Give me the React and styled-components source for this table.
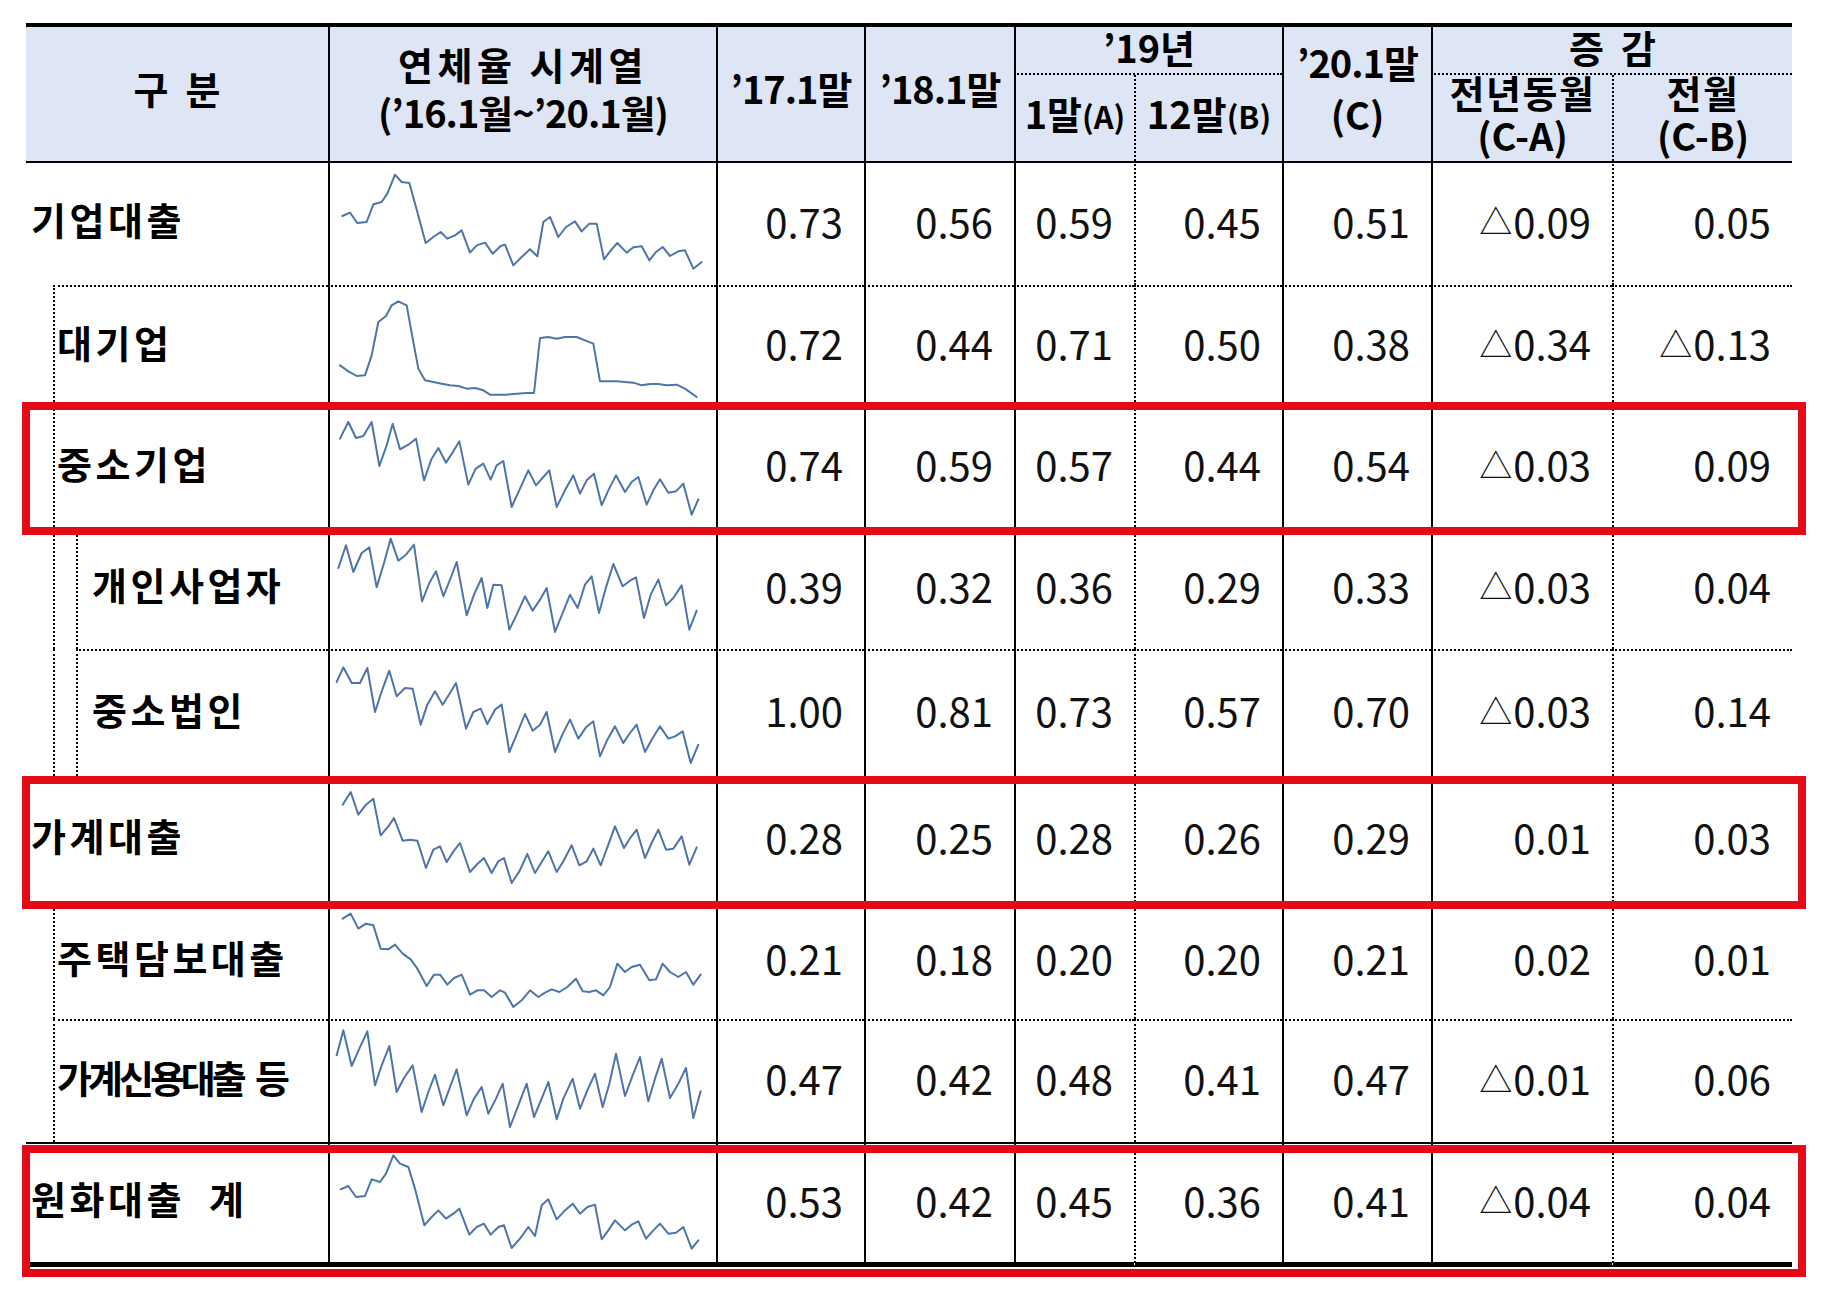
import React from 'react';
import styled, { createGlobalStyle, css } from 'styled-components';

const FONT = `"Noto Sans CJK KR", "Noto Sans", sans-serif`;
const INK = '#000';
const RED = '#e30b17';

const GlobalStyle = createGlobalStyle`
  *, *::before, *::after { box-sizing: border-box; }
  html, body { margin: 0; padding: 0; background: #fff; }
  body { font-family: ${FONT}; color: ${INK}; }
`;

const rule = (kind, w = 2) => (kind ? `${w}px ${kind} ${INK}` : 'none');

// indent rails (27 + 23) + label + sparkline + 7 number columns
const COLS = '27px 23px 252px 388px 148px 150px 120px 148px 149px 181px 180px';

const rows = [
  {
    label: '기업대출', level: 0, pad: 5, line: 'solid', h: 124, off: 3,
    vals: ['0.73', '0.56', '0.59', '0.45', '0.51', '△0.09', '0.05'],
    pts: '37,162 60,152 82,183 110,180 130,127 155,120 172,95 195,38 215,60 238,63 262,150 287,243 310,225 332,210 352,230 375,220 395,205 420,272 440,250 465,242 488,275 512,252 525,248 550,310 575,285 600,262 622,283 640,180 660,165 685,225 708,195 735,178 755,208 778,185 800,185 822,292 845,262 862,243 890,272 910,256 935,253 958,295 978,270 998,255 1020,282 1045,268 1065,265 1090,320 1115,300',
  },
  {
    label: '대기업', level: 1, pad: 2, line: 'dotted', h: 121, off: 375,
    vals: ['0.72', '0.44', '0.71', '0.50', '0.38', '△0.34', '△0.13'],
    pts: '30,610 55,628 80,642 105,640 125,580 145,480 168,462 185,430 205,418 230,430 250,540 265,620 285,655 310,660 335,665 360,670 385,672 410,680 435,678 460,685 480,698 505,698 530,698 560,695 590,693 612,693 630,528 655,525 680,530 705,525 740,525 765,535 790,545 810,658 835,658 860,658 885,660 910,662 935,670 960,666 985,666 1010,670 1040,668 1065,680 1100,705',
  },
  {
    label: '중소기업', level: 1, pad: 2, line: 'dotted', h: 121, off: 738, hl: [-4, -8],
    vals: ['0.74', '0.59', '0.57', '0.44', '0.54', '△0.03', '0.09'],
    pts: '30,830 55,780 78,828 100,822 125,780 148,912 170,850 188,785 210,862 235,848 258,830 282,955 305,890 325,858 348,902 370,868 388,838 415,968 437,920 460,905 482,953 500,910 520,897 545,1035 570,980 595,925 618,970 640,945 658,925 680,1035 705,985 730,940 750,995 770,955 792,935 815,1030 835,985 858,940 885,990 905,960 925,945 950,1028 970,985 990,952 1015,992 1038,988 1060,965 1085,1058 1105,1012',
  },
  {
    label: '개인사업자', level: 2, pad: 14, line: 'dotted', h: 122, off: 3,
    vals: ['0.39', '0.32', '0.36', '0.29', '0.33', '△0.03', '0.04'],
    pts: '25,120 48,52 70,132 95,75 118,58 140,178 162,105 182,32 205,98 228,80 252,50 276,220 298,165 318,130 340,205 362,150 380,102 410,262 432,200 455,150 472,240 490,170 515,172 538,305 560,260 585,205 608,248 630,215 650,180 675,312 700,250 720,200 743,240 765,170 785,145 807,255 828,178 850,108 878,175 900,158 918,148 942,270 962,200 985,155 1008,232 1030,210 1055,172 1078,305 1100,248',
  },
  {
    label: '중소법인', level: 2, pad: 14, line: 'dotted', h: 127, off: 369,
    vals: ['1.00', '0.81', '0.73', '0.57', '0.70', '△0.03', '0.14'],
    pts: '20,462 40,418 65,465 90,465 112,420 135,552 155,490 178,428 200,505 225,480 248,482 272,590 292,530 315,490 338,530 360,495 378,465 408,602 430,552 452,542 472,588 495,545 515,530 538,672 560,620 585,558 608,608 630,590 650,552 675,672 697,620 720,575 745,632 768,598 790,580 810,685 832,635 855,595 880,645 900,615 920,590 945,672 965,635 990,595 1015,632 1035,625 1058,610 1082,705 1105,650',
  },
  {
    label: '가계대출', level: 0, pad: 5, line: 'solid', h: 126, off: 750, hl: [0, -7],
    vals: ['0.28', '0.25', '0.28', '0.26', '0.29', '0.01', '0.03'],
    pts: '38,830 62,792 85,860 108,830 130,812 152,922 175,895 192,870 218,938 240,935 262,938 288,1020 310,965 330,955 350,1002 372,968 390,945 420,1032 442,1008 462,990 485,1035 505,1000 522,990 545,1065 568,1030 592,978 615,1035 635,1002 655,970 680,1032 700,1000 725,952 748,1012 770,1000 790,962 812,1012 835,950 855,895 882,960 902,928 920,905 945,990 965,945 985,905 1008,965 1030,962 1055,925 1078,1010 1100,958',
  },
  {
    label: '주택담보대출', level: 1, pad: 2, line: 'dotted', h: 117, off: 6,
    vals: ['0.21', '0.18', '0.20', '0.20', '0.21', '0.02', '0.01'],
    pts: '38,50 62,35 85,80 108,65 130,70 152,140 175,142 195,128 218,155 242,172 262,200 290,252 312,218 330,218 352,248 372,228 395,218 420,278 442,265 462,265 485,285 510,265 525,272 550,315 575,295 600,265 625,285 645,272 665,262 688,270 712,255 738,230 758,268 778,270 798,265 820,280 840,255 862,185 885,210 905,195 930,188 958,235 978,232 998,185 1020,210 1045,225 1068,210 1090,248 1112,218',
  },
  {
    label: '가계신용대출', tail: ' 등', level: 1, pad: 2, line: 'dotted', h: 123, off: 357,
    vals: ['0.47', '0.42', '0.48', '0.41', '0.47', '△0.01', '0.06'],
    pts: '20,460 40,385 65,492 88,440 112,388 135,550 155,490 178,432 200,570 222,528 248,490 275,630 295,570 315,518 340,610 360,555 380,502 410,640 432,590 455,555 475,635 498,590 518,545 540,675 565,610 590,545 612,645 635,590 655,540 680,652 700,590 728,530 750,620 772,565 795,515 818,615 838,545 858,455 885,582 908,520 930,465 955,598 975,530 995,470 1020,588 1045,545 1068,498 1090,648 1112,568',
  },
  {
    label: '원화대출  계', level: 0, pad: 5, line: 'solid', h: 125, off: 726, hl: [3, -10], foot: true,
    vals: ['0.53', '0.42', '0.45', '0.36', '0.41', '△0.04', '0.04'],
    pts: '32,862 55,852 78,885 105,882 125,832 150,840 168,815 190,760 210,785 235,795 255,860 283,970 305,945 325,925 348,950 370,935 388,920 418,998 440,975 462,965 482,998 505,975 522,970 545,1038 570,1010 595,975 615,1002 635,910 655,892 680,952 702,928 728,905 750,935 772,915 795,908 815,1012 835,985 855,955 885,985 905,968 925,958 948,1010 970,985 990,965 1015,995 1038,992 1060,975 1085,1040 1105,1015',
  },
];

// left rule of each number column (C .. G2)
const valueRules = ['solid', 'solid', 'solid', 'dotted', 'solid', 'solid', 'dotted'];

const Page = styled.div`
  min-height: 1314px;
  padding: 23px 0 40px 26px;
`;

const Table = styled.div`
  width: 1766px;
  border-top: 4px solid ${INK};
`;

const Head = styled.div`
  display: grid;
  grid-template-columns: 302px 388px 148px 150px 120px 148px 149px 181px 180px;
  grid-template-rows: 48px 86px;
  background: #dee5f4;
`;

const HeadCell = styled.div`
  grid-column: ${(p) => p.$col};
  grid-row: ${(p) => p.$row};
  display: flex;
  flex-direction: column;
  align-items: center;
  justify-content: center;
  padding-bottom: ${(p) => p.$pb ?? 8}px;
  border-left: ${(p) => rule(p.$left)};
  border-bottom: ${(p) => rule(p.$bottom)};
  font-size: 38px;
  font-weight: 700;
  line-height: ${(p) => p.$lh ?? 40}px;
  white-space: pre;
`;

const Line = styled.span`
  display: block;
  letter-spacing: ${(p) => p.$spread ?? 0}px;
`;

const Sub = styled.span`
  font-size: 31px;
`;

const Row = styled.div`
  position: relative;
  display: grid;
  grid-template-columns: ${COLS};
  height: ${(p) => p.$h}px;

  ${(p) =>
    p.$hl &&
    css`
      &::after {
        content: '';
        position: absolute;
        top: ${p.$hl[0]}px;
        bottom: ${p.$hl[1]}px;
        left: -4px;
        right: -14px;
        border: 8px solid ${RED};
        pointer-events: none;
        z-index: 2;
      }
    `}
`;

const Indent = styled.div`
  border-left: ${(p) => rule(p.$rail ? 'dotted' : null)};
`;

const Label = styled.div`
  grid-column: ${(p) => p.$level + 1} / 4;
  display: flex;
  align-items: center;
  padding: 0 0 10px ${(p) => p.$pad}px;
  border-top: ${(p) => rule(p.$line)};
  border-left: ${(p) => rule(p.$level ? 'dotted' : null)};
  border-bottom: ${(p) => (p.$foot ? rule('solid', 5) : 'none')};
  font-size: 38px;
  font-weight: 700;
  line-height: 1;
  letter-spacing: 3.5px;
  white-space: pre;
`;

const Squeeze = styled.span`
  letter-spacing: -4px;
`;

const SparkCell = styled.div`
  border-top: ${(p) => rule(p.$line)};
  border-left: ${rule('solid')};
  border-bottom: ${(p) => (p.$foot ? rule('solid', 5) : 'none')};

  svg {
    display: block;
    width: 100%;
    height: 100%;
    overflow: visible;
  }
`;

const Value = styled.div`
  display: flex;
  align-items: center;
  justify-content: flex-end;
  padding: 0 21px 7px 0;
  border-top: ${(p) => rule(p.$line)};
  border-left: ${(p) => rule(p.$rule)};
  border-bottom: ${(p) => (p.$foot ? rule('solid', 5) : 'none')};
  font-size: 40px;
  line-height: 1;
  color: #111;
`;

const Delta = styled.span`
  font-size: 33px;
  margin-right: 1px;
`;

const Sparkline = ({ pts, off, h }) => (
  <svg viewBox={`0 ${off} 1158 ${h * 3}`} preserveAspectRatio="none">
    <polyline
      points={pts}
      fill="none"
      stroke="#4e74a9"
      strokeWidth="6"
      strokeLinejoin="round"
      strokeLinecap="round"
    />
  </svg>
);

const Number = ({ v }) =>
  v.startsWith('△') ? (
    <>
      <Delta>△</Delta>
      {v.slice(1)}
    </>
  ) : (
    v
  );

const BodyRow = ({ r }) => {
  const inner = r.h - 2 - (r.foot ? 5 : 0);
  return (
    <Row $h={r.h} $hl={r.hl}>
      {r.level >= 1 && <Indent />}
      {r.level >= 2 && <Indent $rail />}
      <Label $level={r.level} $pad={r.pad} $line={r.line} $foot={r.foot}>
        {r.tail ? (
          <>
            <Squeeze>{r.label}</Squeeze>
            {r.tail}
          </>
        ) : (
          r.label
        )}
      </Label>
      <SparkCell $line={r.line} $foot={r.foot}>
        <Sparkline pts={r.pts} off={r.off} h={inner} />
      </SparkCell>
      {r.vals.map((v, i) => (
        <Value key={i} $line={r.line} $rule={valueRules[i]} $foot={r.foot}>
          <Number v={v} />
        </Value>
      ))}
    </Row>
  );
};

export default function App() {
  return (
    <Page>
      <GlobalStyle />
      <Table>
        <Head>
          <HeadCell $col="1" $row="1 / 3" $pb={12}>
            <Line>{'구  분'}</Line>
          </HeadCell>
          <HeadCell $col="2" $row="1 / 3" $left="solid" $lh={48} $pb={12}>
            <Line $spread={4.5}>연체율 시계열</Line>
            <Line $spread={-1}>(’16.1월~’20.1월)</Line>
          </HeadCell>
          <HeadCell $col="3" $row="1 / 3" $left="solid" $pb={12}>
            <Line $spread={-1}>’17.1말</Line>
          </HeadCell>
          <HeadCell $col="4" $row="1 / 3" $left="solid" $pb={12}>
            <Line $spread={-1}>’18.1말</Line>
          </HeadCell>
          <HeadCell $col="5 / 7" $row="1" $left="solid" $bottom="dotted" $pb={6}>
            <Line>’19년</Line>
          </HeadCell>
          <HeadCell $col="5" $row="2" $left="solid">
            <Line>
              1말<Sub>(A)</Sub>
            </Line>
          </HeadCell>
          <HeadCell $col="6" $row="2" $left="dotted">
            <Line>
              12말<Sub>(B)</Sub>
            </Line>
          </HeadCell>
          <HeadCell $col="7" $row="1 / 3" $left="solid" $lh={52} $pb={12}>
            <Line $spread={-1}>’20.1말</Line>
            <Line>(C)</Line>
          </HeadCell>
          <HeadCell $col="8 / 10" $row="1" $left="solid" $bottom="dotted" $pb={6}>
            <Line>{'증  감'}</Line>
          </HeadCell>
          <HeadCell $col="8" $row="2" $left="solid" $lh={43} $pb={10}>
            <Line $spread={1.5}>전년동월</Line>
            <Line>(C-A)</Line>
          </HeadCell>
          <HeadCell $col="9" $row="2" $left="dotted" $lh={43} $pb={10}>
            <Line $spread={1.5}>전월</Line>
            <Line>(C-B)</Line>
          </HeadCell>
        </Head>
        {rows.map((r) => (
          <BodyRow key={r.label} r={r} />
        ))}
      </Table>
    </Page>
  );
}
